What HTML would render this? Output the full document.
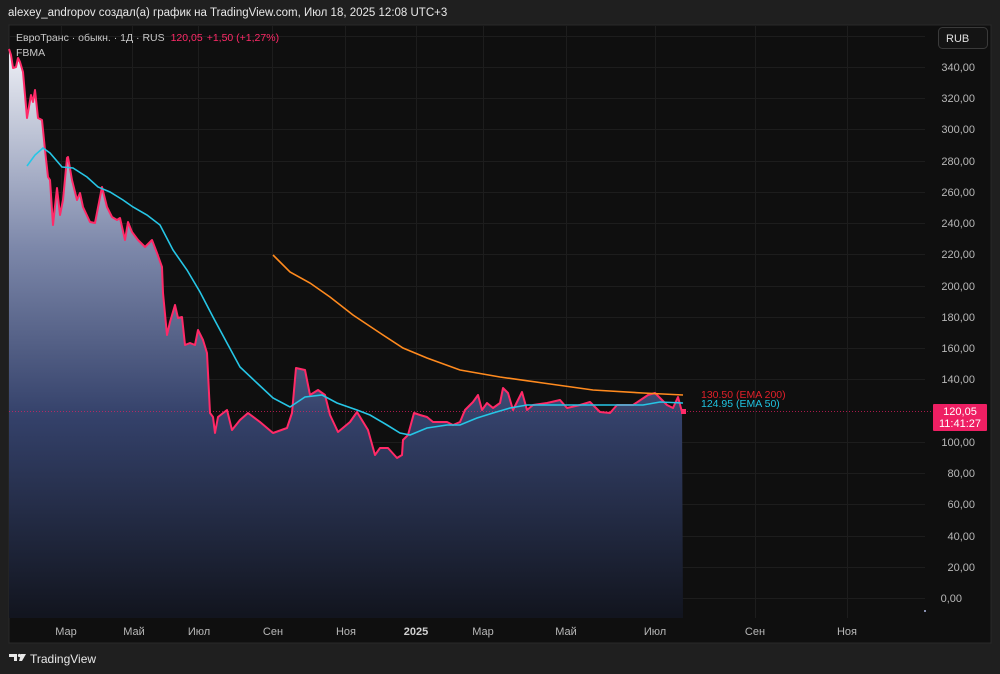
<!DOCTYPE html>
<html><head><meta charset="utf-8"><style>
body{margin:0;width:1000px;height:674px;background:#1f1f1f;overflow:hidden;font-family:"Liberation Sans","Noto Sans CJK SC",sans-serif}
svg{display:block}
</style></head><body>
<svg width="1000" height="674" viewBox="0 0 1000 674" xmlns="http://www.w3.org/2000/svg" font-family="Liberation Sans, Noto Sans CJK SC, sans-serif">
<defs>
<linearGradient id="g" x1="0" y1="49" x2="0" y2="615" gradientUnits="userSpaceOnUse">
<stop offset="0" stop-color="#eef0f6"/>
<stop offset="0.35" stop-color="#7d88aa"/>
<stop offset="0.65" stop-color="#34416a"/>
<stop offset="1" stop-color="#12151f"/>
</linearGradient>
</defs>
<rect width="1000" height="674" fill="#1f1f1f"/>
<text x="8" y="16" fill="#e8e8e8" font-size="11.5">alexey_andropov создал(а) график на TradingView.com, Июл 18, 2025 12:08 UTC+3</text>
<rect x="9" y="25" width="982" height="618" fill="#0f0f0f" stroke="#2a2a2a"/>
<g stroke="#1d1d1d" stroke-width="1">
<line x1="9" x2="925" y1="36.5" y2="36.5"/><line x1="9" x2="925" y1="67.5" y2="67.5"/><line x1="9" x2="925" y1="98.5" y2="98.5"/><line x1="9" x2="925" y1="129.5" y2="129.5"/><line x1="9" x2="925" y1="161.5" y2="161.5"/><line x1="9" x2="925" y1="192.5" y2="192.5"/><line x1="9" x2="925" y1="223.5" y2="223.5"/><line x1="9" x2="925" y1="254.5" y2="254.5"/><line x1="9" x2="925" y1="286.5" y2="286.5"/><line x1="9" x2="925" y1="317.5" y2="317.5"/><line x1="9" x2="925" y1="348.5" y2="348.5"/><line x1="9" x2="925" y1="379.5" y2="379.5"/><line x1="9" x2="925" y1="442.5" y2="442.5"/><line x1="9" x2="925" y1="473.5" y2="473.5"/><line x1="9" x2="925" y1="504.5" y2="504.5"/><line x1="9" x2="925" y1="536.5" y2="536.5"/><line x1="9" x2="925" y1="567.5" y2="567.5"/><line x1="9" x2="925" y1="598.5" y2="598.5"/>
<line x1="61.5" x2="61.5" y1="26" y2="618"/><line x1="132.5" x2="132.5" y1="26" y2="618"/><line x1="198.5" x2="198.5" y1="26" y2="618"/><line x1="272.5" x2="272.5" y1="26" y2="618"/><line x1="345.5" x2="345.5" y1="26" y2="618"/><line x1="416.5" x2="416.5" y1="26" y2="618"/><line x1="483.5" x2="483.5" y1="26" y2="618"/><line x1="566.5" x2="566.5" y1="26" y2="618"/><line x1="655.5" x2="655.5" y1="26" y2="618"/><line x1="755.5" x2="755.5" y1="26" y2="618"/><line x1="847.5" x2="847.5" y1="26" y2="618"/>
</g>
<polygon fill="url(#g)" points="9,618 9,49 11,55 13,68 16,67 18,58 20,62 23,72 27,118 31,95 33,102 35,90 38,118 42,120 45,150 48,177 50,180 53,225 57,188 60,215 63,200 67,158 68,157 72,180 77,200 80,193 83,207 90,222 95,223 102,187 107,207 112,217 117,220 120,218 125,240 128,222 132,232 138,240 145,247 152,240 157,253 162,267 163,293 167,335 170,322 175,305 178,318 182,317 185,345 190,343 195,345 198,330 203,340 207,353 210,413 213,417 215,433 218,417 227,410 232,430 240,420 248,413 260,422 273,433 287,428 292,413 296,368 305,370 310,395 318,390 325,395 330,415 338,432 350,422 357,412 368,430 375,455 380,448 388,448 397,458 402,455 403,440 408,435 414,413 420,415 427,417 433,422 447,422 453,425 460,422 465,410 473,402 478,395 482,410 487,403 493,408 500,403 503,388 508,393 513,410 522,392 527,410 533,405 547,403 560,400 567,408 580,405 590,402 600,412 610,413 617,405 633,405 648,395 655,393 667,405 673,408 678,397 682,412 683,618"/>
<line x1="9" x2="933" y1="411.5" y2="411.5" stroke="#e91e63" stroke-width="1" stroke-dasharray="1,2" opacity="0.7"/>
<polyline fill="none" stroke="#ff2a68" stroke-width="2" stroke-linejoin="round" points="9,49 11,55 13,68 16,67 18,58 20,62 23,72 27,118 31,95 33,102 35,90 38,118 42,120 45,150 48,177 50,180 53,225 57,188 60,215 63,200 67,158 68,157 72,180 77,200 80,193 83,207 90,222 95,223 102,187 107,207 112,217 117,220 120,218 125,240 128,222 132,232 138,240 145,247 152,240 157,253 162,267 163,293 167,335 170,322 175,305 178,318 182,317 185,345 190,343 195,345 198,330 203,340 207,353 210,413 213,417 215,433 218,417 227,410 232,430 240,420 248,413 260,422 273,433 287,428 292,413 296,368 305,370 310,395 318,390 325,395 330,415 338,432 350,422 357,412 368,430 375,455 380,448 388,448 397,458 402,455 403,440 408,435 414,413 420,415 427,417 433,422 447,422 453,425 460,422 465,410 473,402 478,395 482,410 487,403 493,408 500,403 503,388 508,393 513,410 522,392 527,410 533,405 547,403 560,400 567,408 580,405 590,402 600,412 610,413 617,405 633,405 648,395 655,393 667,405 673,408 678,397 682,412"/>
<rect x="681" y="409" width="5" height="5" fill="#ff2a68"/>
<polyline fill="none" stroke="#26c6e6" stroke-width="1.6" points="27,166 35,155 43,148 50,153 62,167 73,168 87,177 98,187 110,192 123,200 133,207 147,215 160,225 173,250 187,270 200,292 213,317 227,343 240,367 257,383 273,398 290,407 305,397 322,395 337,403 357,410 370,415 387,425 400,433 410,435 427,428 447,425 460,425 477,418 493,413 510,408 527,405 560,405 593,405 620,405 643,405 660,402 683,403"/>
<polyline fill="none" stroke="#ff8a1e" stroke-width="1.6" points="273,255 290,272 310,283 330,297 353,315 380,333 403,348 427,358 460,370 500,377 543,383 593,390 643,393 683,395"/>
<text x="701" y="398" fill="#e0202a" font-size="10.5">130.50 (EMA 200)</text>
<text x="701" y="407" fill="#1fc3e0" font-size="10.5">124.95 (EMA 50)</text>
<text x="16" y="41" font-size="10.5" fill="#c8c8c8">ЕвроТранс · обыкн. · 1Д · RUS <tspan fill="#ff2a68" dx="3">120,05</tspan><tspan fill="#ff2a68" dx="4">+1,50 (+1,27%)</tspan></text>
<text x="16" y="56" font-size="10.5" fill="#c8c8c8">FBMA</text>
<rect x="938.5" y="27.5" width="49" height="21" rx="4" fill="#141414" stroke="#3a3a3a"/>
<text x="946" y="42" font-size="11" fill="#e0e0e0">RUB</text>
<g font-size="11" fill="#b8b8b8" text-anchor="end">
<text x="975" y="71">340,00</text><text x="975" y="102">320,00</text><text x="975" y="133">300,00</text><text x="975" y="165">280,00</text><text x="975" y="196">260,00</text><text x="975" y="227">240,00</text><text x="975" y="258">220,00</text><text x="975" y="290">200,00</text><text x="975" y="321">180,00</text><text x="975" y="352">160,00</text><text x="975" y="383">140,00</text><text x="975" y="446">100,00</text><text x="975" y="477">80,00</text><text x="975" y="508">60,00</text><text x="975" y="540">40,00</text><text x="975" y="571">20,00</text><text x="962" y="602">0,00</text>
</g>
<rect x="924" y="610" width="2" height="2" fill="#8890b0"/>
<rect x="933" y="404" width="54" height="27" rx="1" fill="#ee1f63"/>
<text x="960" y="415" font-size="11" fill="#fff" text-anchor="middle">120,05</text>
<text x="960" y="427" font-size="11" fill="#fff" text-anchor="middle">11:41:27</text>
<g font-size="11" fill="#b8b8b8" text-anchor="middle">
<text x="66" y="635">Мар</text><text x="134" y="635">Май</text><text x="199" y="635">Июл</text><text x="273" y="635">Сен</text><text x="346" y="635">Ноя</text><text x="416" y="635" font-weight="bold" fill="#d0d0d0">2025</text><text x="483" y="635">Мар</text><text x="566" y="635">Май</text><text x="655" y="635">Июл</text><text x="755" y="635">Сен</text><text x="847" y="635">Ноя</text>
</g>
<g fill="#e8e8e8">
<path d="M9 654h8v7h-3v-4h-5z"/><circle cx="19.5" cy="655.5" r="1.6"/><path d="M21 654h5l-4 7h-3z"/>
</g>
<text x="30" y="663" font-size="12" fill="#e8e8e8">TradingView</text>
</svg>
</body></html>
